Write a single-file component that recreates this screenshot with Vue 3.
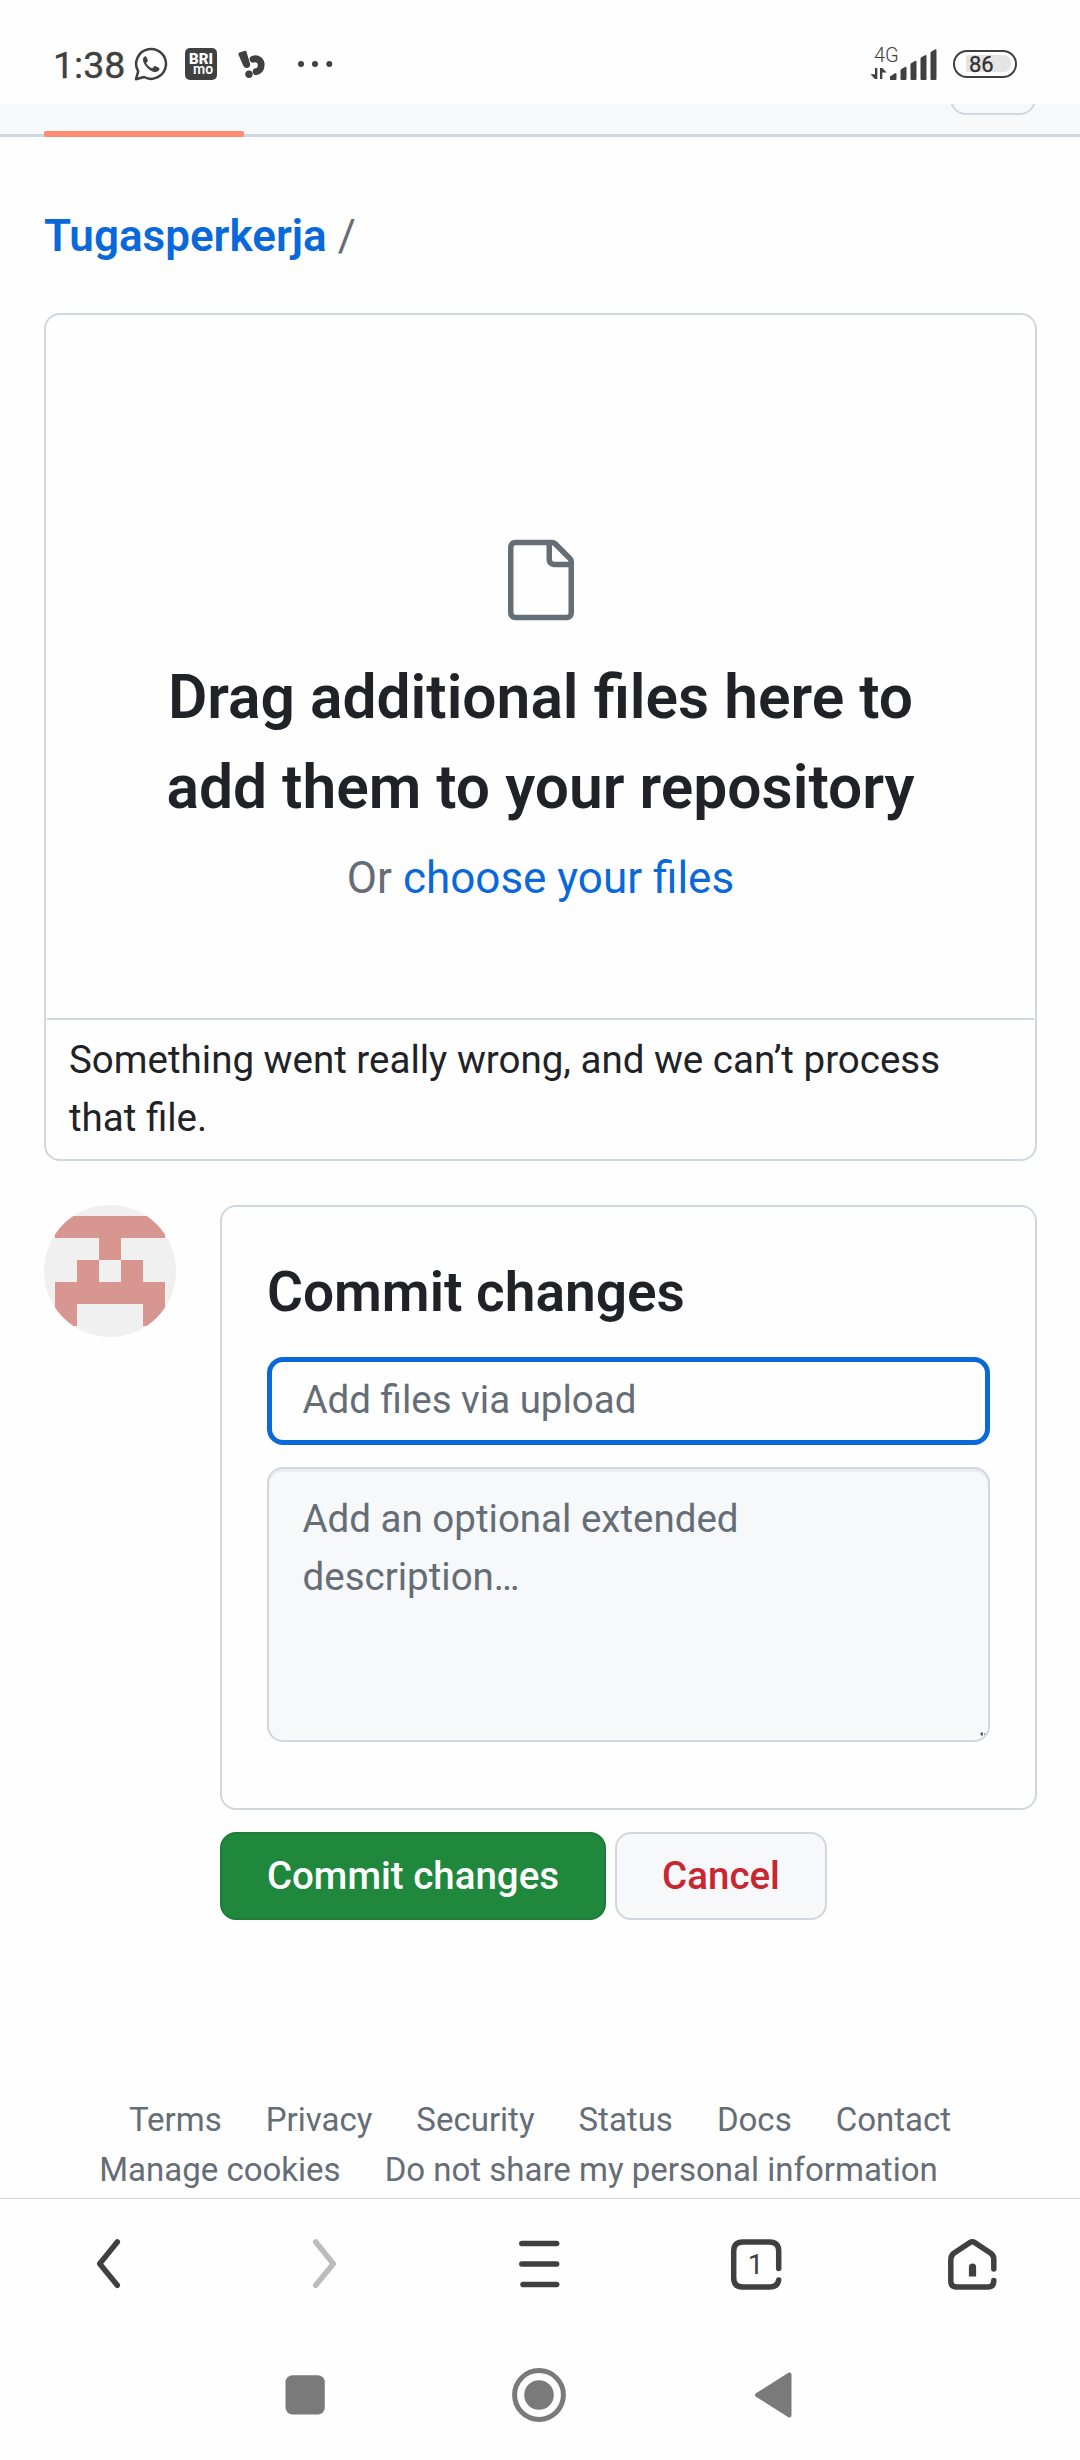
<script setup>
const footerRows = [
  ['Terms', 'Privacy', 'Security', 'Status', 'Docs', 'Contact'],
  ['Manage cookies', 'Do not share my personal information'],
]
const avatarCells = [
  [0, 0, 5], [2, 1, 1], [1, 2, 1], [3, 2, 1], [0, 3, 5], [0, 4, 1], [4, 4, 1],
]
</script>

<template>
  <div class="screen">
    <header class="status">
      <div class="status-left">
        <span class="clock">1:38</span>
        <svg class="wa" width="34" height="34" viewBox="0 0 34 34">
          <path d="M2 32.2 4.2 24.4A14.9 14.9 0 1 1 10 30Z" fill="none" stroke="#404040" stroke-width="2.5" stroke-linejoin="round" />
          <path d="M11.500 9.200c-.7 0-1.600.7-2.200 1.800-1 2 .1 5 2.600 8.200 3 3.700 6.900 6 9.900 5.800 2-.2 3.600-1.500 3.700-3.200 0-.5-.2-.8-.7-1l-3.500-1.700c-.5-.2-.9-.1-1.200.3l-1.300 1.600c-.3.400-.7.400-1.100.200-2.200-1-4-2.600-5.200-4.700-.2-.4-.2-.7.1-1l1-1.300c.3-.3.3-.7.2-1l-1.500-3.500c-.2-.4-.4-.5-.8-.5Z" fill="#404040" />
        </svg>
        <div class="brimo"><b>BRI</b><span>mo</span></div>
        <svg class="bapp" width="28" height="30" viewBox="0 0 28 30">
          <path d="M.3 4.200Q.2 2.800 1.600 2.400L6.800.7Q8 .4 8.400 1.600L12.200 14.300Q12.300 17.400 9.300 18Q6.300 18.300 5.200 15.500Z" fill="#404040" />
          <circle cx="11" cy="24.200" r="3.700" fill="#404040" />
          <path d="M15 9.200C20 7.600 23.200 11 23.200 15C23.200 19 21 21.300 18.200 21.700" fill="none" stroke="#404040" stroke-width="6.800" stroke-linecap="round" />
        </svg>
        <svg class="dots" width="36" height="8" viewBox="0 0 36 8">
          <circle cx="4" cy="4" r="3" fill="#404040" /><circle cx="18" cy="4" r="3" fill="#404040" /><circle cx="32.300" cy="4" r="3" fill="#404040" />
        </svg>
      </div>
      <div class="status-right">
        <svg class="signal" width="68" height="42" viewBox="0 -6 68 42">
          <text x="4" y="16" class="net">4G</text>
          <g fill="#404040">
            <path d="M5 22h2.300v11H5l-4.600-4.800h4.600ZM10 33V22h2.300l4.400 4.600h-4.400V33Z" />
            <path d="M20 34V30.500L25 27.200Q26.500 26.600 26.500 28.500V33Q26.500 34 25.500 34Z" />
            <path d="M30.500 33V24.500Q30.500 23.600 31.400 23L35 21Q36.500 20.400 36.500 22V33Q36.500 34 35.500 34H31.500Q30.500 34 30.500 33Z" />
            <path d="M40.500 33V18.500Q40.500 17.600 41.400 17L45 15Q46.500 14.400 46.500 16V33Q46.500 34 45.500 34H41.500Q40.500 34 40.500 33Z" />
            <path d="M50.500 33V12.700Q50.500 11.800 51.400 11.200L55 9.200Q56.500 8.600 56.500 10.200V33Q56.500 34 55.500 34H51.500Q50.500 34 50.500 33Z" />
            <path d="M60.500 33V7Q60.500 6.100 61.400 5.500L65 3.500Q66.500 2.900 66.500 4.500V33Q66.500 34 65.500 34H61.500Q60.500 34 60.500 33Z" />
          </g>
        </svg>
        <div class="battery"><span>86</span></div>
      </div>
    </header>

    <nav class="tabs">
      <div class="tab-active"></div>
      <div class="more-button"></div>
    </nav>

    <main>
      <div class="crumb"><a>Tugasperkerja</a><span>/</span></div>

      <section class="drop">
        <div class="drop-area">
          <svg width="88" height="88" viewBox="0 0 24 24" fill="#656d76">
            <path d="M3 3a2 2 0 0 1 2-2h9.982a2 2 0 0 1 1.414.586l4.018 4.018A2 2 0 0 1 21 7.018V21a2 2 0 0 1-2 2H5a2 2 0 0 1-2-2Zm2-.5a.5.5 0 0 0-.5.5v18a.5.5 0 0 0 .5.5h14a.5.5 0 0 0 .5-.5V8.500h-4a2 2 0 0 1-2-2v-4Zm10 0v4a.5.5 0 0 0 .5.5h4a.5.5 0 0 0-.146-.336l-4.018-4.018A.5.5 0 0 0 15 2.500Z" />
          </svg>
          <h2>Drag additional files here to<br>add them to your repository</h2>
          <p>Or <a>choose your files</a></p>
        </div>
        <div class="error">Something went really wrong, and we can’t process that file.</div>
      </section>

      <section class="commit">
        <svg class="avatar" width="132" height="132" viewBox="0 0 132 132">
          <rect width="132" height="132" fill="#f0f0f0" />
          <rect v-for="([x, y, w], i) in avatarCells" :key="i" :x="11 + x * 22" :y="11 + y * 22" :width="w * 22" height="22" fill="#d79690" />
        </svg>
        <div class="commit-main">
          <div class="panel">
            <h3>Commit changes</h3>
            <div class="input">Add files via upload</div>
            <div class="textarea">
              Add an optional extended description…
              <svg class="grip" width="5" height="5" viewBox="0 0 5 5"><path d="M2 0v4M0 2h3M4 2h1" stroke="#3c3f43" /></svg>
            </div>
          </div>
          <div class="actions">
            <button class="primary">Commit changes</button>
            <button class="cancel">Cancel</button>
          </div>
        </div>
      </section>
    </main>

    <footer>
      <div v-for="(row, i) in footerRows" :key="i" class="links"><a v-for="link in row" :key="link">{{ link }}</a></div>
    </footer>

    <nav class="browser">
      <svg width="60" height="60" viewBox="0 0 60 60"><path d="M38.300 8 20.700 29.700 38.300 51.300" class="ln" /></svg>
      <svg width="60" height="60" viewBox="0 0 60 60"><path d="M20.700 8 38.300 29.700 20.700 51.300" class="ln faded" /></svg>
      <svg width="60" height="60" viewBox="0 0 60 60"><path d="M11.800 9.500H46.700M11.800 30H46.700M13 50.500H46.700" class="ln" /></svg>
      <svg width="60" height="60" viewBox="0 0 60 60">
        <path d="M52.700 34.500V17Q52.700 8 43.700 8H16.700Q7.700 8 7.700 17V44Q7.700 53 16.700 53H43.700Q51.500 53 52.700 46" class="ln" />
        <text x="29.500" y="40" class="count">1</text>
      </svg>
      <svg width="60" height="60" viewBox="0 0 60 60">
        <g transform="translate(1.300 0)">
          <path d="M51.500 35V25Q51.500 21.500 48.500 19.200L32.500 8.600Q30 7 27.500 8.600L11.500 19.200Q8.500 21.500 8.500 26V47Q8.500 53 14.500 53H45.500Q51.500 53 51.500 46.500" class="ln" />
          <path d="M26.600 42.500V33a3.600 3.600 0 0 1 7.200 0V42.500Z" fill="#404040" />
        </g>
      </svg>
    </nav>

    <nav class="system">
      <svg width="60" height="60" viewBox="0 0 60 60"><rect x="10.500" y="10.300" width="39.300" height="39.300" rx="7" fill="#7a7a7a" /></svg>
      <svg width="60" height="60" viewBox="0 0 60 60"><circle cx="30" cy="30" r="24.400" fill="none" stroke="#7a7a7a" stroke-width="5" /><circle cx="30" cy="30" r="14.800" fill="#7a7a7a" /></svg>
      <svg width="60" height="60" viewBox="0 0 60 60"><path d="M14 30 46.500 9.500V50.500Z" fill="#7a7a7a" stroke="#7a7a7a" stroke-width="4" stroke-linejoin="round" /></svg>
    </nav>
  </div>
</template>

<style>
body { background: #fefefe; }
</style>

<style scoped>
.screen {
  width: 1080px;
  height: 2460px;
  overflow: hidden;
  display: flex;
  flex-direction: column;
  background: #fefefe;
  color: #1f2328;
  font-family: Roboto, sans-serif;
}
* { box-sizing: border-box; }
svg { display: block; flex: none; }
h2, h3, p { margin: 0; font-weight: 600; }

.status {
  flex: none;
  height: 104px;
  padding: 46px 63px 0 53px;
  display: flex;
  justify-content: space-between;
  align-items: flex-start;
  color: #404040;
}
.status-left, .status-right { display: flex; align-items: flex-start; }
.clock { width: 81px; font-size: 37.500px; line-height: 38px; font-weight: 400; -webkit-text-stroke: .4px #404040; }
.wa { margin-top: 1px; }
.brimo {
  width: 32px;
  height: 32px;
  margin: 2px 0 0 17px;
  padding-top: 6px;
  border-radius: 5px;
  background: #404040;
  color: #fefefe;
  display: flex;
  flex-direction: column;
  align-items: flex-end;
  line-height: 11px;
}
.brimo b { width: 28px; height: 11px; font-size: 15px; font-weight: 900; }
.brimo span { width: 24px; height: 11px; font-size: 14px; font-weight: 600; line-height: 9px; }
.bapp { margin: 4px 0 0 21px; }
.dots { margin: 14px 0 0 31px; }
.signal { margin-top: -6px; }
.net { font-size: 20px; fill: #404040; font-weight: 300; }
.battery {
  width: 64px;
  height: 28px;
  margin: 4px 0 0 15px;
  border: 2.500px solid #404040;
  border-radius: 14px;
  padding: 3px 4px 4px 11px;
}
.battery span {
  display: block;
  height: 17px;
  padding-left: 3px;
  border-radius: 2px 7px 7px 2px;
  background: #e4e4e4;
  color: #303030;
  font-size: 22px;
  line-height: 19px;
  font-weight: 400;
  -webkit-text-stroke: .3px #303030;
}

.tabs {
  flex: none;
  height: 33px;
  display: flex;
  justify-content: space-between;
  align-items: flex-start;
  padding: 0 44px;
  background: #f6f8fa;
  border-bottom: 3px solid #d0d7de;
}
.tab-active { width: 200px; height: 6px; margin-top: 27px; border-radius: 2px; background: #fd8c73; }
.more-button { width: 86px; height: 11px; position: relative; overflow: hidden; }
.more-button::after {
  content: "";
  position: absolute;
  inset: -66px 0 0;
  border: 2px solid #d0d7de;
  border-radius: 16px;
}

main { flex: none; height: 1958px; padding: 66px 43px 0 44px; }
.crumb { height: 66px; line-height: 66px; font-size: 44px; display: flex; }
.crumb a { color: #0969da; font-weight: 600; }
.crumb span { color: #656d76; margin-left: 11px; }

.drop { margin-top: 44px; height: 848px; border: 2px solid #d0d7de; border-radius: 16px; }
.drop-area {
  height: 705px;
  margin: 0 1px;
  padding-top: 221px;
  border-bottom: 2px solid #d0d7de;
  display: flex;
  flex-direction: column;
  align-items: center;
  text-align: center;
}
.drop-area h2 { margin-top: 29px; font-size: 60.500px; line-height: 90px; }
.drop-area p { margin-top: 12px; font-size: 44px; line-height: 66px; font-weight: 400; color: #656d76; }
.drop-area a { color: #0969da; }
.error { padding: 11px 60px 0 23px; font-size: 38.500px; line-height: 58px; }

.commit { margin-top: 44px; display: flex; }
.avatar { border-radius: 50%; }
.commit-main { width: 817px; margin-left: 44px; }
.panel { height: 605px; padding: 44px 45px; border: 2px solid #d0d7de; border-radius: 16px; }
.panel h3 { font-size: 55px; line-height: 82px; }
.input {
  margin-top: 24px;
  height: 88px;
  border: 5px solid #0969da;
  border-radius: 16px;
  padding: 9px 30.500px;
  font-size: 38.500px;
  line-height: 58px;
  color: #656d76;
}
.textarea {
  position: relative;
  margin-top: 22px;
  height: 275px;
  border: 2px solid #d0d7de;
  border-radius: 16px;
  padding: 21px 60px 0 33.500px;
  background: #f6f8fa;
  box-shadow: inset 0 3px 0 rgba(208, 215, 222, .3);
  font-size: 38.500px;
  line-height: 58px;
  color: #656d76;
}
.grip { position: absolute; right: 3px; bottom: 3px; }
.actions { margin-top: 22px; display: flex; gap: 9px; }
button { height: 88px; padding: 0; font: 500 38.500px/84px Roboto, sans-serif; border-radius: 16px; border: 2px solid #d0d7de; }
.primary { width: 386px; background: #1f883d; border-color: #1f7b38; color: #fff; }
.cancel { width: 212px; background: #f6f8fa; color: #c82630; }

footer { flex: none; height: 104px; border-bottom: 1px solid #d5d5d5; }
.links { height: 50px; display: flex; justify-content: center; gap: 44px; font-size: 33px; line-height: 50px; color: #656d76; }
.links:last-child { padding-right: 43px; }

.browser {
  flex: none;
  height: 131px;
  padding: 35px 79px 0;
  display: flex;
  justify-content: space-between;
}
.ln { fill: none; stroke: #404040; stroke-width: 5.500px; stroke-linecap: round; stroke-linejoin: round; }
.faded { stroke: #bcbcbc; }
.count { font-size: 28px; fill: #404040; text-anchor: middle; }
.system { flex: none; height: 130px; padding: 35px 0 0 275px; display: flex; gap: 174px; }
</style>
